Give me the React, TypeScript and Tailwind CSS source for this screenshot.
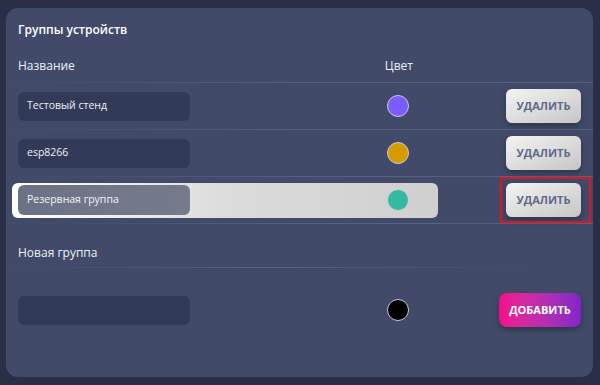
import React from "react";

const font = { fontFamily: '"Open Sans", "Noto Sans", sans-serif' };

function Divider({ fade = false }: { fade?: boolean }) {
  return (
    <div
      className={
        fade
          ? "h-px w-full bg-gradient-to-r from-transparent via-[#5a6482] to-transparent"
          : "h-px w-full bg-gradient-to-r from-[#414b69] via-[#58617f] to-[#58617f]"
      }
    />
  );
}

function DelButton({ outlined = false }: { outlined?: boolean }) {
  return (
    <button className="relative ml-auto w-[75px] h-[34px] rounded-md bg-gradient-to-br from-[#f4f4f4] to-[#c6c6c6] text-[#5e6a8b] text-[11px] font-bold shadow-[0_3px_6px_rgba(0,0,0,0.3)]">
      УДАЛИТЬ
      {outlined && (
        <span className="absolute left-[-6px] right-[-10px] top-[-6px] bottom-[-6px] border-2 border-[#e0161e] pointer-events-none" />
      )}
    </button>
  );
}

function Row({ name, color }: { name: string; color: string }) {
  return (
    <div className="h-[46px] flex items-center pl-3 pr-3">
      <div className="w-[172px] h-[29px] rounded-md bg-[#313a56] flex items-center pl-[9px] text-[10.5px] text-[#eef0f6]">
        {name}
      </div>
      <div
        className="ml-[197px] w-[22px] h-[22px] rounded-full border border-[#c9c9d6]"
        style={{ backgroundColor: color }}
      />
      <DelButton />
    </div>
  );
}

export default function App() {
  return (
    <div className="w-[600px] h-[385px] bg-[#2a2f48] pt-2 pl-[6px]" style={font}>
      <div className="w-[587px] h-[369px] rounded-xl bg-[#414b69] flex flex-col">
        <div className="h-[42px] flex items-center pl-3 pt-[2px] text-[12px] font-semibold text-white">
          Группы устройств
        </div>
        <div className="h-[32px] flex items-center pl-3 text-[12px] text-[#eef0f6]">
          <span>Название</span>
          <span className="ml-[310px]">Цвет</span>
        </div>
        <Divider />
        <Row name="Тестовый стенд" color="#7b5cff" />
        <Divider />
        <Row name="esp8266" color="#d49c00" />
        <Divider />
        <div className="h-[46px] flex items-center pl-[6px] pr-3">
          <div className="w-[426px] h-[35px] rounded-md bg-gradient-to-r from-[#ffffff] via-[#dcdcdc] to-[#cfcfcf] flex items-center pl-[6px]">
            <div className="w-[172px] h-[30px] rounded-md bg-gradient-to-r from-[#6c7286] to-[#767b8b] flex items-center pl-[9px] text-[10.5px] text-[#f2f3f7]">
              Резервная группа
            </div>
            <div className="ml-[197px] w-[22px] h-[22px] rounded-full bg-[#35b9a2] border border-[#d0d0d0]" />
          </div>
          <DelButton outlined />
        </div>
        <Divider />
        <div className="h-[43px] flex items-end pl-3 pb-[5px] text-[12px] text-[#eef0f6]">
          Новая группа
        </div>
        <div className="pl-0 pr-[60px]">
          <Divider fade />
        </div>
        <div className="h-[84px] flex items-center pl-3 pr-3">
          <div className="w-[172px] h-[29px] rounded-md bg-[#313a56]" />
          <div className="ml-[197px] w-[22px] h-[22px] rounded-full bg-black border border-[#c9c9d6]" />
          <button className="ml-auto w-[82px] h-[34px] rounded-lg bg-gradient-to-r from-[#f5078c] to-[#8424c8] text-white text-[11px] font-bold shadow-[0_3px_6px_rgba(0,0,0,0.3)]">
            ДОБАВИТЬ
          </button>
        </div>
      </div>
    </div>
  );
}
